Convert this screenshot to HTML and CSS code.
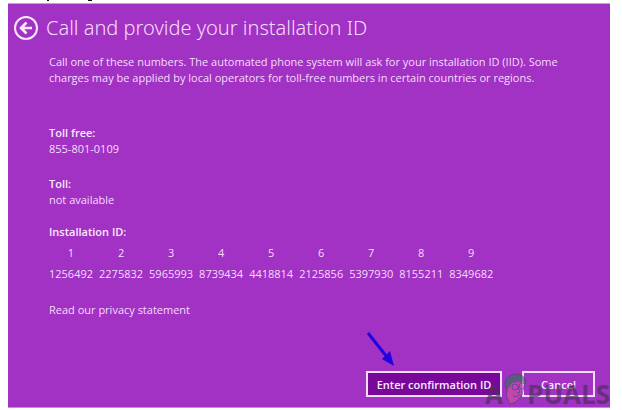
FILE: index.html
```html
<!DOCTYPE html>
<html lang="en">
<head>
    <meta charset="UTF-8">
    <title>Phone Activation</title>
    <link rel="stylesheet" href="styles.css">
</head>
<body>

<!-- Tails of the line above the panel -->
<svg class="line-above" viewBox="0 0 46 1" width="46" height="1" aria-hidden="true">
    <path d="M0 0H2V1H0ZM41 0H45V1H41Z" fill="#111"/>
</svg>

<main class="panel">
    <!-- Title row with the back button -->
    <header class="panel-header">
        <button class="back-btn" type="button" aria-label="Back">
            <svg viewBox="0 0 24 24" width="24" height="24" fill="none" stroke="currentColor">
                <circle cx="12" cy="12" r="11" stroke-width="2"/>
                <path d="M18 12H7M12.5 6.5L7 12L12.5 17.5" stroke-width="2.6"/>
            </svg>
        </button>
        <h1>Call and provide your installation ID</h1>
    </header>

    <div class="content">
        <p class="intro">Call one of these numbers. The automated phone system will ask for your installation ID (IID). Some<br>
            charges may be applied by local operators for toll-free numbers in certain countries or regions.</p>

        <dl class="phones">
            <div class="phone">
                <dt>Toll free:</dt>
                <dd>855-801-0109</dd>
            </div>
            <div class="phone">
                <dt>Toll:</dt>
                <dd>not available</dd>
            </div>
        </dl>

        <table class="ids">
            <caption>Installation ID:</caption>
            <thead>
                <tr><th>1</th><th>2</th><th>3</th><th>4</th><th>5</th><th>6</th><th>7</th><th>8</th><th>9</th></tr>
            </thead>
            <tbody>
                <tr><td>1256492</td><td>2275832</td><td>5965993</td><td>8739434</td><td>4418814</td><td>2125856</td><td>5397930</td><td>8155211</td><td>8349682</td></tr>
            </tbody>
        </table>

        <a class="privacy" href="#">Read our privacy statement</a>
    </div>

    <footer class="actions">
        <button class="btn btn-primary" type="button">Enter confirmation ID</button>
        <button class="btn btn-cancel" type="button">Cancel</button>

        <!-- Arrow pointing at the confirm button -->
        <svg class="pointer" viewBox="0 0 30 36" width="30" height="36">
            <path d="M3 2L22 26" stroke="#2200e0" stroke-width="3"/>
            <path d="M29 35L17 28L25 20Z" fill="#2200e0"/>
        </svg>

        <!-- Site watermark -->
        <div class="watermark">
            <span>A</span>
            <svg viewBox="0 0 24 32" width="24" height="32">
                <path d="M5 12C5 17 3 20 4 24L7 31L13 29L19 22L21 12L17 9L8 10Z" fill="#d0519f"/>
                <path d="M3 16C0 8 5 2 13 1C20 1 24 6 22 12L18 8L9 10L6 15Z" fill="#3d6f62"/>
                <path d="M3 16C0 8 5 2 13 1C20 1 24 6 22 12M4 15C4 19 3 21 4 25L7 31L13 29L19 22L21 13" fill="none" stroke="#574070"/>
                <g fill="none" stroke="#4b49a8">
                    <circle cx="12" cy="14" r="3"/>
                    <circle cx="19" cy="13" r="3"/>
                    <path d="M15 14H16M15 15L17 19L14 20M10 23Q14 25 17 21"/>
                </g>
            </svg>
            <span>PUALS</span>
        </div>
    </footer>
</main>

</body>
</html>
```
FILE: styles.css
```css
/* Reset and General Styles */
* {
    margin: 0;
    padding: 0;
    box-sizing: border-box;
}

body {
    background: #fff;
    font-family: "Open Sans", "Noto Sans", sans-serif;
    font-size: 11px;
    line-height: 16px;
    color: #f6dcfb;
    min-height: 100vh;
    display: flex;
    padding: 3px 12px 2px 8px;
}

.line-above {
    position: absolute;
    top: 0;
    left: 47px;
}

.panel {
    flex: 1;
    display: flex;
    flex-direction: column;
    background: #a132c4;
    border-top: 1px solid #c9a0d6;
    border-bottom: 1px solid #c58ad8;
    padding: 10px 15px 10px 6px;
}

/* Title */
.panel-header {
    display: flex;
    align-items: center;
    gap: 8px;
}

.back-btn {
    display: flex;
    background: none;
    border: none;
    color: #fbeaff;
    cursor: pointer;
}

h1 {
    font-family: "Noto Sans", "Open Sans", sans-serif;
    font-size: 20px;
    font-weight: 300;
    line-height: 28px;
}

/* Text */
.content {
    flex: 1;
    padding: 12px 0 0 35px;
}

.phones {
    display: flex;
    flex-direction: column;
    gap: 19px;
    margin-top: 39px;
}

dt, caption {
    font-weight: 600;
    color: #fbeaff;
}

/* Installation ID groups */
.ids {
    border-collapse: collapse;
    margin-top: 16px;
}

caption {
    text-align: left;
    padding-bottom: 4px;
}

th, td {
    font-weight: 400;
    text-align: center;
    padding: 1px 6px 4px 0;
}

.privacy {
    display: inline-block;
    margin-top: 16px;
    color: inherit;
    text-decoration: none;
}

/* Buttons */
.actions {
    position: relative;
    display: flex;
    justify-content: flex-end;
    gap: 20px;
}

.btn {
    height: 26px;
    border: 2px solid #f6dcfb;
    color: #fbeaff;
    font: 600 11px "Open Sans", "Noto Sans", sans-serif;
    cursor: pointer;
}

.btn-primary {
    width: 136px;
    background: #780899;
}

.btn-cancel {
    width: 73px;
    background: transparent;
}

.pointer {
    position: absolute;
    right: 200px;
    bottom: 30px;
}

/* Watermark */
.watermark {
    position: absolute;
    right: -15px;
    bottom: -8px;
    display: flex;
    align-items: flex-end;
    color: #50305f;
    font: 700 26px/22px "Open Sans", "Noto Sans", sans-serif;
    opacity: 0.7;
    pointer-events: none;
}
```
